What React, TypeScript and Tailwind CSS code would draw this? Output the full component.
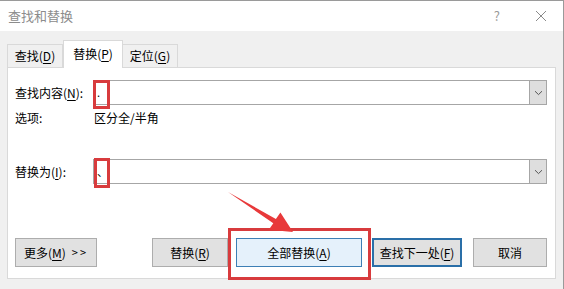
import React from "react";

const font = { fontFamily: '"Noto Sans CJK SC", "Noto Sans", sans-serif' };

function Key({ k }: { k: string }) {
  return <span className="underline underline-offset-2">{k}</span>;
}

function Combo({ value }: { value: string }) {
  return (
    <div className="flex h-[25px] w-[454px] border border-[#a6a6a6] bg-white">
      <div className="flex flex-1 items-center pl-[3px] text-[11px] leading-none text-black">{value}</div>
      <div className="flex w-[17px] items-center justify-center border-l border-[#a6a6a6] bg-[#dedede]">
        <svg width="9" height="6" viewBox="0 0 9 6">
          <path d="M1 1.2 L4.5 4.6 L8 1.2" fill="none" stroke="#555" strokeWidth="1" />
        </svg>
      </div>
    </div>
  );
}

function Btn({ children, className }: { children: React.ReactNode; className: string }) {
  return (
    <div className={`flex h-[29px] items-center justify-center text-[12px] text-black ${className}`}>
      {children}
    </div>
  );
}

export default function App() {
  return (
    <div
      className="relative h-[289px] w-[564px] overflow-hidden border-t border-r border-[#9a9a9a] bg-[#f0f0f0]"
      style={font}
    >
      {/* Title bar */}
      <div className="flex h-[30px] items-center bg-white pl-[8px] pr-[16px] text-[13px] text-[#8c8c8c]">
        <span>查找和替换</span>
        <span className="ml-auto mr-[35px] text-[13px] text-[#9a9a9a]">?</span>
        <svg width="12" height="12" viewBox="0 0 12 12">
          <path d="M1 1 L11 11 M11 1 L1 11" stroke="#8a8a8a" strokeWidth="1" />
        </svg>
      </div>

      {/* Tabs */}
      <div className="flex items-end pl-[7px] pt-[9px]">
        <div className="flex h-[23px] w-[56px] items-center justify-center border border-b-0 border-[#d9d9d9] bg-[#f0f0f0] text-[12px] text-black">
          查找(<Key k="D" />)
        </div>
        <div className="relative z-10 -mb-px flex h-[28px] w-[60px] items-center justify-center border border-b-0 border-[#d9d9d9] bg-white pb-[2px] text-[12px] text-black">
          替换(<Key k="P" />)
        </div>
        <div className="flex h-[23px] w-[55px] items-center justify-center border border-b-0 border-l-0 border-[#d9d9d9] bg-[#f0f0f0] text-[12px] text-black">
          定位(<Key k="G" />)
        </div>
      </div>

      {/* Panel */}
      <div className="ml-[7px] h-[212px] w-[549px] border border-[#d9d9d9] bg-white">
        <div className="mt-[12px] flex h-[25px] items-center pl-[7px]">
          <div className="w-[78px] text-[12px] text-black">
            查找内容(<Key k="N" />):
          </div>
          <Combo value="." />
        </div>
        <div className="flex h-[26px] items-center pl-[7px] text-[12px] text-black">
          <div className="w-[79px]">选项:</div>
          <div>区分全/半角</div>
        </div>
        <div className="mt-[28px] flex h-[25px] items-center pl-[7px]">
          <div className="w-[78px] text-[12px] text-black">
            替换为(<Key k="I" />):
          </div>
          <Combo value="、" />
        </div>
        <div className="mt-[54px] flex items-center pl-[7px]">
          <Btn className="w-[82px] border border-[#adadad] bg-[#e1e1e1]">
            更多(<Key k="M" />)<span className="ml-[6px] tracking-[2px] text-[11px]">&gt;&gt;</span>
          </Btn>
          <Btn className="ml-[55px] w-[76px] border border-[#adadad] bg-[#e1e1e1]">
            替换(<Key k="R" />)
          </Btn>
          <Btn className="ml-[8px] w-[126px] border border-[#3d7fb5] bg-[#e5f1fb]">
            全部替换(<Key k="A" />)
          </Btn>
          <Btn className="ml-[10px] w-[90px] border-2 border-[#2a6fa8] bg-[#e1e1e1]">
            查找下一处(<Key k="F" />)
          </Btn>
          <Btn className="ml-[11px] w-[74px] border border-[#adadad] bg-[#e1e1e1]">
            取消
          </Btn>
        </div>
      </div>

      {/* Annotations */}
      <div className="absolute left-[93px] top-[79px] h-[29px] w-[17px] border-[3px] border-[#d83b3d]" />
      <div className="absolute left-[94px] top-[157px] h-[30px] w-[16px] border-[3px] border-[#d83b3d]" />
      <div className="absolute left-[228px] top-[227px] h-[52px] w-[143px] border-[3px] border-[#d83b3d]" />
      <svg className="pointer-events-none absolute left-0 top-0" width="564" height="289">
        <polygon
          points="228,191 275.9,218.1 280.4,211.6 293,231 268.8,228.8 273.3,222.3"
          fill="#e8393a"
        />
      </svg>
    </div>
  );
}
